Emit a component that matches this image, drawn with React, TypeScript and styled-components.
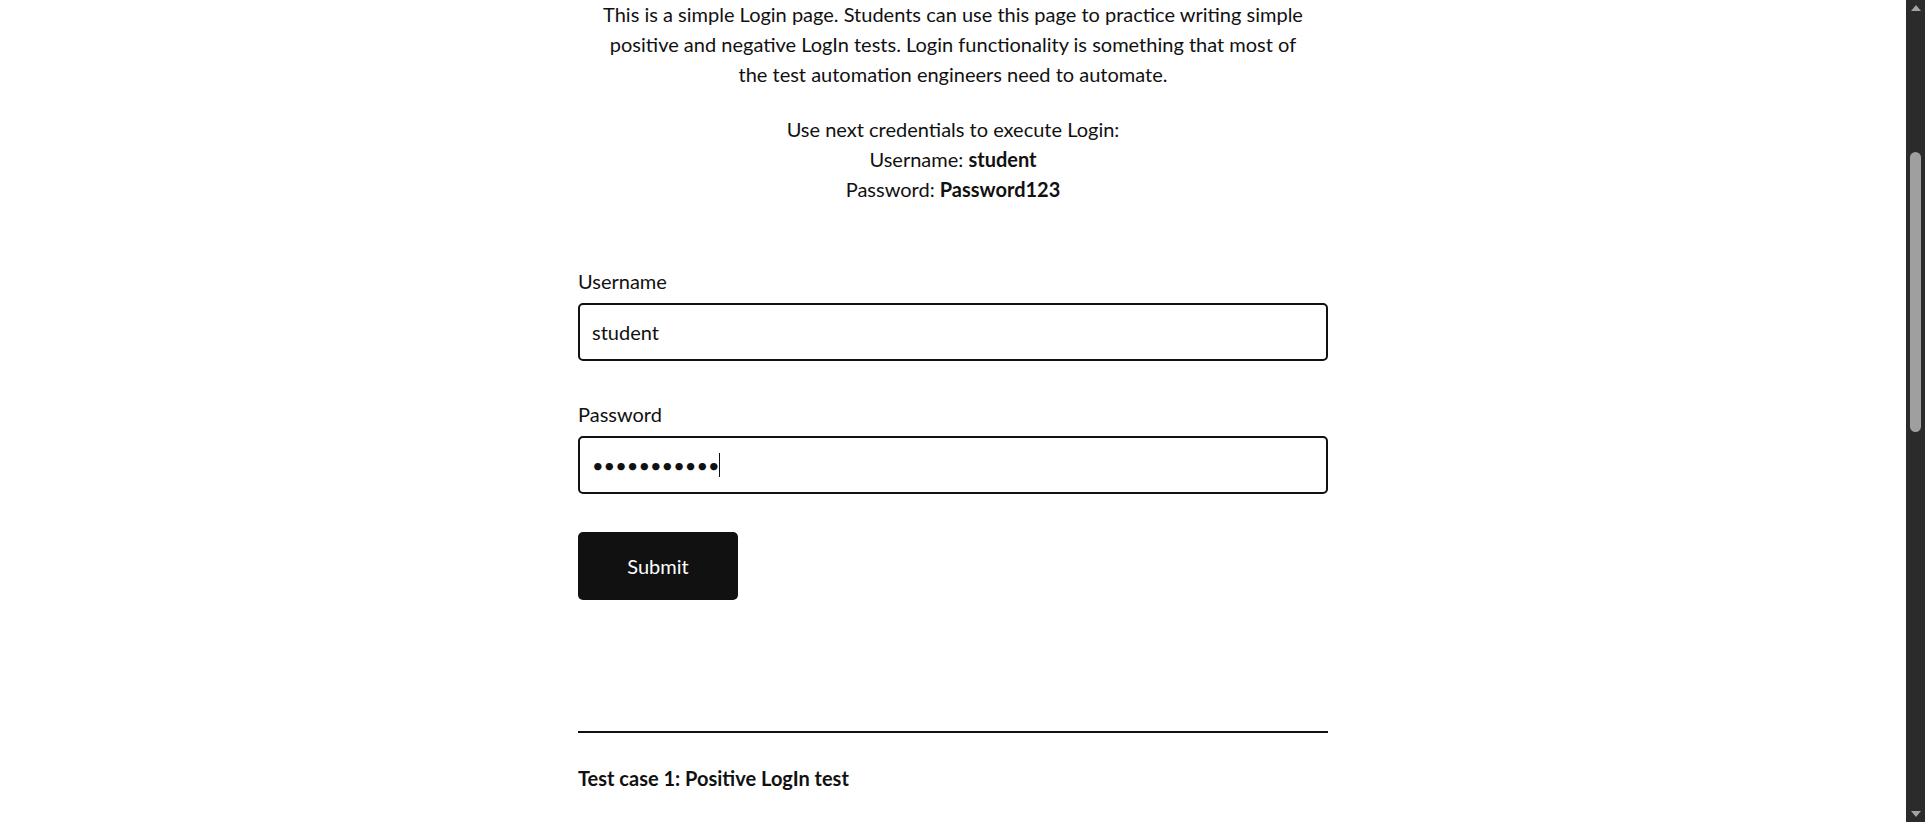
import React from "react";
import styled, { createGlobalStyle } from "styled-components";

const GlobalStyle = createGlobalStyle`
  html, body {
    margin: 0;
    background: #ffffff;
    overflow: hidden;
  }
  body {
    color: #111111;
    font-family: Lato, "Open Sans", Arial, sans-serif;
    font-size: 20px;
    line-height: 30px;
  }
  * { box-sizing: border-box; }
`;

const Viewport = styled.div`
  display: flex;
  height: 100vh;
  width: 100vw;
`;

const Scroller = styled.div`
  flex: 1;
  min-width: 0;
  overflow: hidden;
`;

const ScrollTrack = styled.div`
  width: 19px;
  flex: none;
  background: #2b2b2b;
  display: flex;
  flex-direction: column;
  align-items: center;
`;

const ArrowButton = styled.div`
  height: 16px;
  width: 100%;
  display: flex;
  align-items: center;
  justify-content: center;
  flex: none;
`;

const Thumb = styled.div`
  width: 11px;
  height: 280px;
  margin-top: 136px;
  border-radius: 6px;
  background: #9f9f9f;
  flex: none;
`;

const TrackSpace = styled.div`
  flex: 1;
`;

const Page = styled.main`
  width: 750px;
  margin: 0 auto;
`;

const Intro = styled.section`
  text-align: center;
  margin-top: -1px;
  margin-bottom: 62px;
`;

const Para = styled.p`
  max-width: 700px;
  margin: 0 auto 25px;
  &:last-child { margin-bottom: 0; }
`;

const Form = styled.form`
  display: flex;
  flex-direction: column;
`;

const Group = styled.div`
  display: flex;
  flex-direction: column;
  margin-bottom: 38px;
`;

const Label = styled.label`
  display: block;
  line-height: 30px;
  margin-bottom: 7px;
`;

const InputWrap = styled.div`
  position: relative;
`;

const Input = styled.input`
  display: block;
  width: 100%;
  height: 58px;
  padding: 0 12px;
  border: 2px solid #111111;
  border-radius: 5px;
  background: #ffffff;
  color: #111111;
  font-family: Lato, "Open Sans", Arial, sans-serif;
  font-size: 20px;
  outline: none;
  caret-color: transparent;
  &:focus { outline: none; }
`;

const Caret = styled.span`
  position: absolute;
  left: 141px;
  top: 17px;
  width: 1px;
  height: 24px;
  background: #111111;
`;

const SubmitButton = styled.button`
  width: 160px;
  height: 68px;
  border: none;
  border-radius: 5px;
  background: #111111;
  color: #ffffff;
  font-family: Lato, "Open Sans", Arial, sans-serif;
  font-size: 20px;
  padding: 0;
  cursor: pointer;
`;

const Divider = styled.hr`
  margin: 131px 0 0;
  border: none;
  border-top: 2px solid #111111;
  height: 0;
`;

const CaseSection = styled.section`
  margin-top: 30px;
`;

const CaseTitle = styled.h5`
  margin: 0 0 34px;
  font-size: 20px;
  font-weight: 700;
  line-height: 30px;
`;

const Steps = styled.ol`
  margin: 0 0 40px;
  padding-left: 24px;
`;

const cases = [
  {
    title: "Test case 1: Positive LogIn test",
    steps: [
      <>Open page</>,
      <>Type username <b>student</b> into Username field</>,
      <>Type password <b>Password123</b> into Password field</>,
      <>Push Submit button</>,
      <>Verify new page URL contains <b>practicetestautomation.com/logged-in-successfully/</b></>,
      <>Verify new page contains expected text ('Congratulations' or 'successfully logged in')</>,
      <>Verify button Log out is displayed on the new page</>,
    ],
  },
  {
    title: "Test case 2: Negative username test",
    steps: [
      <>Open page</>,
      <>Type username <b>incorrectUser</b> into Username field</>,
      <>Type password <b>Password123</b> into Password field</>,
      <>Push Submit button</>,
      <>Verify error message is displayed</>,
      <>Verify error message text is <b>Your username is invalid!</b></>,
    ],
  },
];

const UpArrow = () => (
  <svg width="10" height="6" viewBox="0 0 10 6">
    <path d="M5 0 L10 6 L0 6 Z" fill="#a3a3a3" />
  </svg>
);

const DownArrow = () => (
  <svg width="10" height="6" viewBox="0 0 10 6">
    <path d="M0 0 L10 0 L5 6 Z" fill="#a3a3a3" />
  </svg>
);

export default function App() {
  return (
    <>
      <GlobalStyle />
      <Viewport>
        <Scroller>
          <Page>
            <Intro>
              <Para>
                This is a simple Login page. Students can use this page to practice writing simple
                positive and negative LogIn tests. Login functionality is something that most of
                the test automation engineers need to automate.
              </Para>
              <Para>
                Use next credentials to execute Login:
                <br />
                Username: <b>student</b>
                <br />
                Password: <b>Password123</b>
              </Para>
            </Intro>
            <Form onSubmit={(e) => e.preventDefault()}>
              <Group>
                <Label htmlFor="username">Username</Label>
                <InputWrap>
                  <Input id="username" type="text" defaultValue="student" />
                </InputWrap>
              </Group>
              <Group>
                <Label htmlFor="password">Password</Label>
                <InputWrap>
                  <Input id="password" type="password" defaultValue="Password123" />
                  <Caret />
                </InputWrap>
              </Group>
              <div>
                <SubmitButton type="submit">Submit</SubmitButton>
              </div>
            </Form>
            <Divider />
            {cases.map((c) => (
              <CaseSection key={c.title}>
                <CaseTitle>{c.title}</CaseTitle>
                <Steps>
                  {c.steps.map((s, i) => (
                    <li key={i}>{s}</li>
                  ))}
                </Steps>
              </CaseSection>
            ))}
          </Page>
        </Scroller>
        <ScrollTrack>
          <ArrowButton>
            <UpArrow />
          </ArrowButton>
          <Thumb />
          <TrackSpace />
          <ArrowButton>
            <DownArrow />
          </ArrowButton>
        </ScrollTrack>
      </Viewport>
    </>
  );
}
